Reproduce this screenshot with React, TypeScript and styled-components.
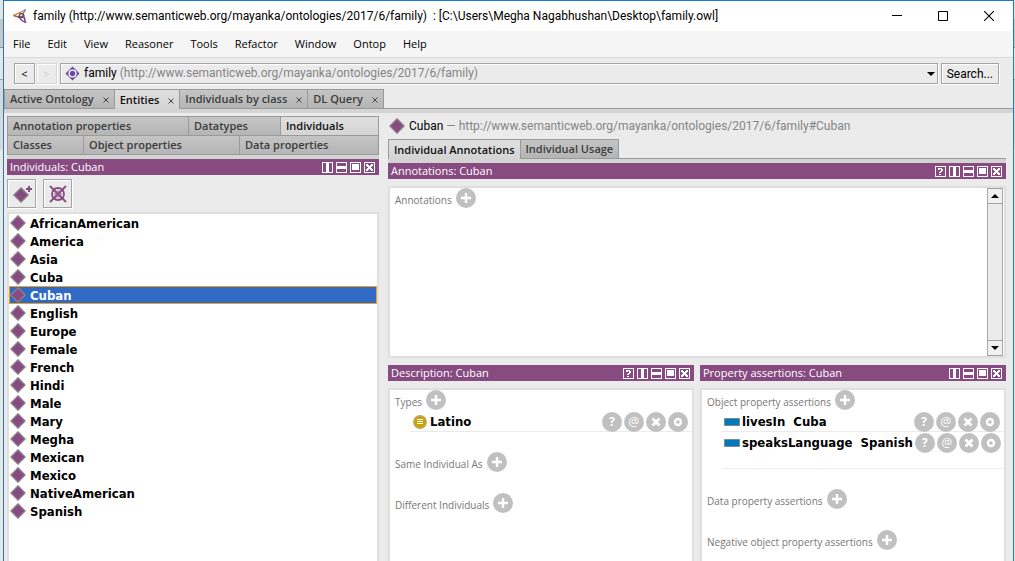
import React from 'react';
import styled, { createGlobalStyle, css } from 'styled-components';

const purple = '#874b82';
const line = '#999b99';
const strip = '#d4d4d4';
const uiFont = '"Open Sans", "Noto Sans", sans-serif';
const urlFont = 'Roboto, "Open Sans", sans-serif';
const entityFont = '"DejaVu Sans Condensed", "DejaVu Sans", sans-serif';

const GlobalStyle = createGlobalStyle`
  * { box-sizing: border-box; }
  body { margin: 0; background: #c9c9c9; font: 11px/16px ${uiFont}; color: #000; }
  button, select { font: inherit; color: inherit; }
  button { padding: 0; margin: 0; border: 0; background: none; cursor: default; }
  ul, h1, h2, h3 { margin: 0; padding: 0; list-style: none; font: inherit; }
  svg { display: block; flex: none; }
`;

const Desktop = styled.div`
  height: 100vh;
  overflow: hidden;
  padding: 0 1px 0 3px;
  background: linear-gradient(#e4e4e4 19px, #c6c6c6 19px, #c6c6c6 47px, #8e8e8e 47px, #8e8e8e 48px,
    #e6e6e6 48px, #e6e6e6 79px, #a0a0a0 79px, #a0a0a0 80px, #d8d8d8 80px, #d8d8d8 150px, #e8e8e8 150px);
`;
const Window = styled.div`
  height: 100%;
  display: flex;
  flex-direction: column;
  background: #ebebeb;
  border: 1px solid #1b7ccc;
  border-bottom: 0;
`;

const TitleBar = styled.header`
  display: flex;
  align-items: center;
  flex: none;
  height: 30px;
  padding: 0 1px 0 9px;
  gap: 6px;
  background: #fff;
  font: 12px/16px ${urlFont};
  white-space: pre;
`;
const TitleText = styled.h1`flex: 1; overflow: hidden;`;
const WindowControls = styled.div`display: flex;`;
const WindowButton = styled.button`
  width: 46px;
  height: 30px;
  display: flex;
  align-items: center;
  justify-content: center;
`;
const MenuBar = styled.nav`
  display: flex;
  flex: none;
  height: 27px;
  padding: 0 9px;
  gap: 17px;
  background: #f5f5f5;
  border-bottom: 1px solid #dadada;
`;
const MenuItem = styled.button`line-height: 26px;`;

const ToolRow = styled.div`
  display: flex;
  flex: none;
  align-items: center;
  height: 31px;
  padding: 0 14px 0 10px;
`;
const bevel = css`
  border: 1px solid #a5a5a5;
  box-shadow: 1px 1px 0 #fff, inset 1px 1px 0 #fff;
  background: #ebebeb;
`;
const NavButton = styled.button`
  ${bevel}
  width: 21px;
  height: 21px;
  margin-right: 1px;
  line-height: 18px;
  &:disabled { border-color: #d8d8d8; color: #cfcfcf; }
`;
const SearchButton = styled.button`
  ${bevel}
  height: 21px;
  padding: 0 5px;
  margin-left: 3px;
  font: 12px/18px ${urlFont};
`;
const Combo = styled.div`
  ${bevel}
  flex: 1;
  display: grid;
  height: 21px;
  margin-left: 2px;
  font: 12px/19px ${urlFont};
  > * { grid-area: 1 / 1; }
`;
const ComboSelect = styled.select`
  appearance: none;
  width: 100%;
  border: 0;
  outline: 0;
  background: transparent;
  color: transparent;
`;
const ComboFace = styled.span`
  display: flex;
  align-items: center;
  gap: 4px;
  padding: 0 2px 0 4px;
  pointer-events: none;
  white-space: nowrap;
`;
const Muted = styled.span`color: #858585;`;
const Push = styled.span`flex: 1;`;

const TabStrip = styled.div`
  display: flex;
  flex: none;
  height: 20px;
  border-bottom: 1px solid ${line};
`;
const Underlay = styled.div`
  flex: none;
  height: 4px;
  background: ${strip};
`;
const Tab = styled.button<{ $active?: boolean; $grow?: number }>`
  display: flex;
  align-items: center;
  justify-content: space-between;
  height: ${p => (p.$active ? 20 : 19)}px;
  padding: 0 5px;
  gap: 9px;
  border: 1px solid ${line};
  border-width: 1px 1px 0 0;
  background: ${p => (p.$active ? 'linear-gradient(#e0e0e0, #d4d4d4)' : 'linear-gradient(#c5c5c5, #b5b5b5)')};
  color: ${p => (p.$active ? '#111' : '#3c3c3c')};
  font: 600 11px/16px ${uiFont};
  white-space: nowrap;
  &:first-child { border-left-width: 1px; }
  ${p => p.$grow && css`height: 19px; flex: ${p.$grow} 1 0;`}
`;
const CloseMark = styled.svg`margin: 2px 0 0;`;

const Body = styled.main`
  flex: 1;
  min-height: 0;
  display: grid;
  grid-template-columns: 372px 1fr;
  column-gap: 9px;
  padding: 0 7px 0 3px;
`;
const Column = styled.section`
  display: flex;
  flex-direction: column;
  min-width: 0;
  min-height: 0;
`;
const TabRows = styled.div`
  flex: none;
  margin-top: 3px;
  border-bottom: 1px solid ${line};
`;
const TabRow = styled.div`
  display: flex;
  height: 19px;
`;

const PanelHeader = styled.header`
  display: flex;
  flex: none;
  align-items: center;
  height: 16px;
  padding: 0 4px 0 3px;
  gap: 3px;
  background: ${purple};
  color: #fff;
`;
const PanelTitle = styled.h2`
  flex: 1;
  white-space: nowrap;
`;
const Box = styled.div<{ $fill?: boolean }>`
  display: flex;
  min-height: 0;
  margin-top: 7px;
  overflow: hidden;
  border: 2px solid #dfdfdf;
  background: #fff;
  ${p => (p.$fill ? 'flex: 1; border-bottom: 0;' : 'flex: none; height: 172px;')}
`;
const ActionRow = styled.div`
  display: flex;
  flex: none;
  gap: 7px;
  padding: 4px 0;
`;
const ActionButton = styled.button`
  ${bevel}
  display: grid;
  place-items: center;
  width: 29px;
  height: 29px;
`;
const EntityList = styled.ul`
  flex: 1;
  border: 2px solid #dfdfdf;
  border-bottom: 0;
  background: #fff;
  font: bold 13px/16px ${entityFont};
`;
const EntityButton = styled.button<{ $selected?: boolean }>`
  display: flex;
  align-items: center;
  gap: 4px;
  width: 100%;
  height: 18px;
  border: 1px solid ${p => (p.$selected ? '#f0a020' : 'transparent')};
  background: ${p => (p.$selected ? '#316ac5' : 'none')};
  color: ${p => (p.$selected ? '#fff' : '#000')};
`;
const EntityName = styled.span`padding-top: 1px;`;

const EntityHeading = styled.div`
  display: flex;
  flex: none;
  align-items: center;
  gap: 4px;
  height: 26px;
  padding-left: 1px;
  font: 12px/16px ${urlFont};
  white-space: pre;
`;
const LowerPanels = styled.div`
  flex: 1;
  min-height: 0;
  display: grid;
  grid-template-columns: 1fr 1fr;
  gap: 6px;
  margin-top: 7px;
`;

const Sections = styled.div`
  flex: 1;
  min-width: 0;
  display: flex;
  flex-direction: column;
  gap: 20px;
`;
const Section = styled.section`min-height: 21px;`;
const SectionHead = styled.div`
  display: flex;
  align-items: flex-end;
  gap: 4px;
  height: 20px;
  padding-left: 5px;
  margin-bottom: 1px;
  color: #777;
`;
const SectionTitle = styled.h3`
  font-size: 10px;
  line-height: 15px;
  white-space: nowrap;
`;
const Axiom = styled.div<{ $last?: boolean }>`
  display: flex;
  align-items: center;
  gap: 2px;
  height: ${p => (p.$last ? 37 : 21)}px;
  margin-left: 20px;
  padding: 1px 4px ${p => (p.$last ? 16 : 0)}px 2px;
  box-shadow: inset 0 -1px 0 #ebebeb;
  font: bold 13px/16px ${entityFont};
  white-space: pre;
`;
const AxiomText = styled.span`flex: 1;`;
const Round = styled.button<{ $light?: boolean }>`
  display: grid;
  place-items: center;
  flex: none;
  width: 20px;
  height: 20px;
  border-radius: 50%;
  background: #c0c0c0;
  color: #fff;
  font: ${p => (p.$light ? 'normal' : 'bold')} 12px/20px ${uiFont};
`;
const ScrollBar = styled.div`
  display: flex;
  flex-direction: column;
  justify-content: space-between;
  width: 16px;
  margin-right: 1px;
  background: #ebebeb;
  border: 1px solid #a9a9a9;
  border-width: 0 1px;
`;
const ScrollButton = styled.button`
  display: grid;
  place-items: center;
  height: 16px;
  border: 1px solid #a0a0a0;
  border-width: 1px 0;
  background: #f0f0f0;
`;

const Diamond = () => (
  <svg width="16" height="16" viewBox="0 0 16 16">
    <path d="M8 .8 15.2 8 8 15.2.8 8Z" fill={purple} stroke="#8d858c" strokeWidth="1.3" />
  </svg>
);

type Glyph = 'help' | 'split' | 'stack' | 'float' | 'close';
const glyphNames: Record<Glyph, string> = {
  help: 'Help', split: 'Split vertically', stack: 'Split horizontally', float: 'Float', close: 'Close',
};
const HeaderIcon = ({ glyph }: { glyph: Glyph }) => (
  <button aria-label={glyphNames[glyph]}>
    <svg width="11" height="11" viewBox="0 0 11 11" fill="#fff" shapeRendering="crispEdges">
      <path d="M0 0h11v11H0zM1 1v9h9V1z" fillRule="evenodd" />
      {glyph === 'help' && <path d="M3 2h4v1H3zM6 3h2v2H6zM3 3h2v1H3zM5 5h2v1H5zM4 6h2v1H4zM4 8h2v1H4z" />}
      {glyph === 'split' && <path d="M4 1h3v9H4z" />}
      {glyph === 'stack' && <path d="M1 4h9v3H1z" />}
      {glyph === 'float' && <path d="M2 2h7v6H2z" />}
      {glyph === 'close' && <path d="M2 2h2v1h1v1h1V3h1V2h2v2H8v1H7v1h1v1h1v2H7V8H6V7H5v1H4v1H2V7h1V6h1V5H3V4H2z" />}
    </svg>
  </button>
);

const Panel = ({ title, glyphs }: { title: string; glyphs: Glyph[] }) => (
  <PanelHeader>
    <PanelTitle>{title}</PanelTitle>
    {glyphs.map(g => <HeaderIcon key={g} glyph={g} />)}
  </PanelHeader>
);

const AddButton = ({ label }: { label: string }) => (
  <Round aria-label={`Add ${label}`}>
    <svg width="10" height="10" viewBox="0 0 10 10"><path d="M5 0v10M0 5h10" stroke="#fff" strokeWidth="2.4" /></svg>
  </Round>
);

const AxiomActions = () => (
  <>
    <Round aria-label="Explain">?</Round>
    <Round aria-label="Annotate" $light>@</Round>
    <Round aria-label="Delete">
      <svg width="10" height="10" viewBox="0 0 10 10"><path d="m1.5 1.5 7 7m0-7-7 7" stroke="#fff" strokeWidth="2.8" /></svg>
    </Round>
    <Round aria-label="Edit">
      <svg width="10" height="10" viewBox="0 0 10 10"><circle cx="5" cy="5" r="3" fill="none" stroke="#fff" strokeWidth="2.4" /></svg>
    </Round>
  </>
);

const SectionBlock = ({ title, children }: { title: string; children?: React.ReactNode }) => (
  <Section>
    <SectionHead>
      <SectionTitle>{title}</SectionTitle>
      <AddButton label={title} />
    </SectionHead>
    {children}
  </Section>
);

const ClassIcon = () => (
  <svg width="16" height="14" viewBox="0 0 16 14">
    <circle cx="8" cy="7" r="6.3" fill="#c9a200" stroke="#b9a76b" strokeWidth="1.2" />
    <path d="M5 4.5h6M5 6.5h6M5 8.5h6" stroke="#fff" strokeWidth="1" />
  </svg>
);
const PropertyIcon = () => (
  <svg width="16" height="8" viewBox="0 0 16 8">
    <path d="M.5.5h15v7H.5z" fill="#0079ba" stroke="#7d8a90" />
  </svg>
);

const Logo = () => (
  <svg width="14" height="14" viewBox="0 0 14 14" fill="none" strokeWidth="1.4">
    <path d="M.5 6.5 8.5 3l4-2.5" stroke="#d08a4c" />
    <path d="m.5 6.5 6 2 5-2" stroke="#a8653a" />
    <path d="M12.5.5 10 5l2 6" stroke="#5d8fb5" />
    <path d="m5 7 4 4.5 3.5 2L11 8" stroke="#7c3f92" />
    <circle cx="8.5" cy="6.5" r="2" stroke="#6b4a5d" />
  </svg>
);

const individuals = ['AfricanAmerican', 'America', 'Asia', 'Cuba', 'Cuban', 'English', 'Europe', 'Female', 'French',
  'Hindi', 'Male', 'Mary', 'Megha', 'Mexican', 'Mexico', 'NativeAmerican', 'Spanish'];
const menus = ['File', 'Edit', 'View', 'Reasoner', 'Tools', 'Refactor', 'Window', 'Ontop', 'Help'];
const mainTabs = ['Active Ontology', 'Entities', 'Individuals by class', 'DL Query'];
const entityTabs: [string, number][][] = [
  [['Annotation properties', 170], ['Datatypes', 81], ['Individuals', 87]],
  [['Classes', 65], ['Object properties', 145], ['Data properties', 128]],
];
const allGlyphs: Glyph[] = ['help', 'split', 'stack', 'float', 'close'];
const noHelp = allGlyphs.slice(1);

export default function App() {
  return (
    <Desktop>
      <GlobalStyle />
      <Window>
        <TitleBar>
          <Logo />
          <TitleText>{'family (http://www.semanticweb.org/mayanka/ontologies/2017/6/family)  : [C:\\Users\\Megha Nagabhushan\\Desktop\\family.owl]'}</TitleText>
          <WindowControls>
            <WindowButton aria-label="Minimize">
              <svg width="10" height="10" viewBox="0 0 10 10"><path d="M0 4.5h10" stroke="#000" /></svg>
            </WindowButton>
            <WindowButton aria-label="Maximize">
              <svg width="10" height="10" viewBox="0 0 10 10"><path d="M.5.5h9v9h-9z" fill="none" stroke="#000" /></svg>
            </WindowButton>
            <WindowButton aria-label="Close">
              <svg width="10" height="10" viewBox="0 0 10 10"><path d="m0 0 10 10M10 0 0 10" stroke="#000" strokeWidth="1.1" /></svg>
            </WindowButton>
          </WindowControls>
        </TitleBar>
        <MenuBar>{menus.map(m => <MenuItem key={m}>{m}</MenuItem>)}</MenuBar>
        <ToolRow>
          <NavButton aria-label="Back">&lt;</NavButton>
          <NavButton aria-label="Forward" disabled>&gt;</NavButton>
          <Combo>
            <ComboSelect aria-label="Active ontology"><option>family</option></ComboSelect>
            <ComboFace aria-hidden="true">
              <svg width="15" height="15" viewBox="0 0 15 15">
                <path d="M7.5.5 14.5 7.5l-7 7-7-7Z" fill="#6a4a9c" />
                <circle cx="7.5" cy="7.5" r="3.4" fill="none" stroke="#fff" strokeWidth="1.4" />
              </svg>
              <span>family <Muted>(http://www.semanticweb.org/mayanka/ontologies/2017/6/family)</Muted></span>
              <Push />
              <svg width="8" height="4" viewBox="0 0 8 4"><path d="M0 0h8L4 4Z" /></svg>
            </ComboFace>
          </Combo>
          <SearchButton>Search...</SearchButton>
        </ToolRow>
        <TabStrip role="tablist">
          {mainTabs.map(t => (
            <Tab key={t} role="tab" $active={t === 'Entities'}>
              {t}
              <CloseMark width="6" height="6" viewBox="0 0 6 6"><path d="m.5.5 5 5m0-5-5 5" stroke="#444" /></CloseMark>
            </Tab>
          ))}
        </TabStrip>
        <Underlay />
        <Body>
          <Column>
            <TabRows role="tablist">
              {entityTabs.map((row, i) => (
                <TabRow key={i}>
                  {row.map(([t, grow]) => (
                    <Tab key={t} role="tab" $grow={grow} $active={t === 'Individuals'}>{t}</Tab>
                  ))}
                </TabRow>
              ))}
            </TabRows>
            <Underlay />
            <Panel title="Individuals: Cuban" glyphs={noHelp} />
            <ActionRow>
              <ActionButton aria-label="Add individual">
                <svg width="20" height="20" viewBox="0 0 20 20">
                  <path d="M9 3.8 16.2 11 9 18.2 1.8 11Z" fill={purple} stroke="#8d858c" strokeWidth="1.3" />
                  <path d="M17 2v6M14 5h6" stroke={purple} strokeWidth="2" />
                </svg>
              </ActionButton>
              <ActionButton aria-label="Delete individual">
                <svg width="18" height="18" viewBox="0 0 18 18" fill="none" stroke={purple} strokeWidth="1.8">
                  <circle cx="9" cy="9" r="6" />
                  <path d="m1 1 16 16M17 1 1 17" />
                  <path d="M9 5.5 12.5 9 9 12.5 5.5 9Z" strokeWidth="1" />
                </svg>
              </ActionButton>
            </ActionRow>
            <EntityList>
              {individuals.map(name => (
                <li key={name}>
                  <EntityButton $selected={name === 'Cuban'}><Diamond /><EntityName>{name}</EntityName></EntityButton>
                </li>
              ))}
            </EntityList>
          </Column>
          <Column>
            <EntityHeading>
              <Diamond />
              <span>Cuban<Muted> — http://www.semanticweb.org/mayanka/ontologies/2017/6/family#Cuban</Muted></span>
            </EntityHeading>
            <TabStrip role="tablist">
              <Tab role="tab" $active>Individual Annotations</Tab>
              <Tab role="tab">Individual Usage</Tab>
            </TabStrip>
            <Underlay />
            <Panel title="Annotations: Cuban" glyphs={allGlyphs} />
            <Box>
              <Sections><SectionBlock title="Annotations" /></Sections>
              <ScrollBar>
                <ScrollButton aria-label="Scroll up">
                  <svg width="8" height="4" viewBox="0 0 8 4"><path d="M0 4h8L4 0Z" /></svg>
                </ScrollButton>
                <ScrollButton aria-label="Scroll down">
                  <svg width="8" height="4" viewBox="0 0 8 4"><path d="M0 0h8L4 4Z" /></svg>
                </ScrollButton>
              </ScrollBar>
            </Box>
            <LowerPanels>
              <Column>
                <Panel title="Description: Cuban" glyphs={allGlyphs} />
                <Box $fill>
                  <Sections>
                    <SectionBlock title="Types">
                      <Axiom><ClassIcon /><AxiomText>Latino</AxiomText><AxiomActions /></Axiom>
                    </SectionBlock>
                    <SectionBlock title="Same Individual As" />
                    <SectionBlock title="Different Individuals" />
                  </Sections>
                </Box>
              </Column>
              <Column>
                <Panel title="Property assertions: Cuban" glyphs={noHelp} />
                <Box $fill>
                  <Sections>
                    <SectionBlock title="Object property assertions">
                      <Axiom><PropertyIcon /><AxiomText>{'livesIn  Cuba'}</AxiomText><AxiomActions /></Axiom>
                      <Axiom $last><PropertyIcon /><AxiomText>{'speaksLanguage  Spanish'}</AxiomText><AxiomActions /></Axiom>
                    </SectionBlock>
                    <SectionBlock title="Data property assertions" />
                    <SectionBlock title="Negative object property assertions" />
                  </Sections>
                </Box>
              </Column>
            </LowerPanels>
          </Column>
        </Body>
      </Window>
    </Desktop>
  );
}
